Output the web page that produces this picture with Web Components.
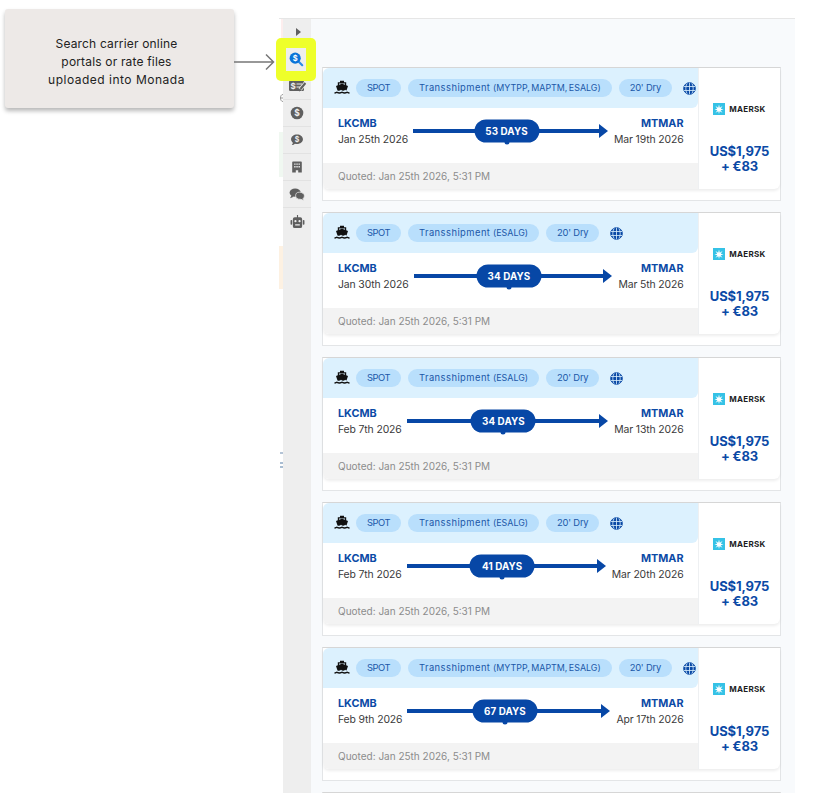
<!DOCTYPE html>
<html>
<head>
<meta charset="utf-8">
<title>Rates</title>
<style>
  html, body { margin: 0; padding: 0; background: #fff; }
  body { font-family: Inter, "Open Sans", sans-serif; }
</style>
</head>
<body>
<quote-page>
  <note-callout slot="note">Search carrier online<br>portals or rate files<br><span style="letter-spacing:.5px">uploaded into Monada</span></note-callout>
  <side-rail slot="rail"></side-rail>
  <rate-card slot="cards" via="(MYTPP, MAPTM, ESALG)" depart="Jan 25th 2026" arrive="Mar 19th 2026" days="53"></rate-card>
  <rate-card slot="cards" via="(ESALG)" depart="Jan 30th 2026" arrive="Mar 5th 2026" days="34"></rate-card>
  <rate-card slot="cards" via="(ESALG)" depart="Feb 7th 2026" arrive="Mar 13th 2026" days="34"></rate-card>
  <rate-card slot="cards" via="(ESALG)" depart="Feb 7th 2026" arrive="Mar 20th 2026" days="41"></rate-card>
  <rate-card slot="cards" via="(MYTPP, MAPTM, ESALG)" depart="Feb 9th 2026" arrive="Apr 17th 2026" days="67"></rate-card>
  <rate-card slot="cards"></rate-card>
</quote-page>

<script>
class QuotePage extends HTMLElement {
  constructor() {
    super();
    this.attachShadow({ mode: 'open' });
    this.shadowRoot.innerHTML = `
      <style>
        :host { display: flex; width: 822px; height: 793px; overflow: hidden; background: #fff; }
        .left { width: 279px; flex: none; padding: 9px 0 0 5px; box-sizing: border-box; }
        .panel {
          width: 484px; flex: none; box-sizing: border-box; height: 775px; margin-top: 18px;
          padding: 48px 14px 0 11px; background: #f8fafc; border-top: 1px solid #e6e6e6;
          display: flex; flex-direction: column; gap: 11px; overflow: hidden;
        }
        .rail { flex: none; display: flex; }
      </style>
      <div class="left"><slot name="note"></slot></div>
      <div class="rail"><slot name="rail"></slot></div>
      <div class="panel"><slot name="cards"></slot></div>
    `;
  }
}

class NoteCallout extends HTMLElement {
  constructor() {
    super();
    this.attachShadow({ mode: 'open' });
    this.shadowRoot.innerHTML = `
      <style>
        :host {
          display: flex; align-items: center; justify-content: center; position: relative;
          width: 229px; height: 99px; box-sizing: border-box; padding: 7px 6px 0 0;
          background: #ede9e7; border-radius: 3px;
          box-shadow: 0 3px 4px rgba(0,0,0,.28);
          font: 400 12px/18px Inter, sans-serif; letter-spacing: .17px; color: #222; text-align: center;
        }
        svg { position: absolute; left: 229px; top: 42px; }
        .text { display: block; }
      </style>
      <span class="text"><slot></slot></span>
      <svg width="42" height="22" viewBox="0 0 42 22" fill="none" stroke="#777" stroke-width="1.5">
        <path d="M0 11H39M32 3.5L39.5 11L32 18.5"/>
      </svg>
    `;
  }
}

const RAIL_ICONS = {
  quote: `<svg width="17" height="14" viewBox="0 0 17 14"><rect x="0" y="1.500" width="15" height="10.500" rx="1.200" fill="#5f5f5f"/><text x="1.500" y="9.800" font-family="Inter" font-size="8" font-weight="700" fill="#eee">$</text><path stroke="#eee" stroke-width="1.200" d="M7.500 5H13M7.500 8h3.500"/><path stroke="#eee" stroke-width="3.800" d="M16.500 4L11 10.500"/><path stroke="#5f5f5f" stroke-width="2.200" d="M16.500 4L11.500 10"/><path fill="#5f5f5f" d="M10 12.500l.7-2.900 2 1.700z"/></svg>`,
  dollar: `<svg width="14" height="14" viewBox="0 0 14 14"><circle cx="7" cy="7" r="6.300" fill="#5f5f5f"/><text x="7" y="10.100" text-anchor="middle" font-family="Inter" font-size="8.500" font-weight="700" fill="#eee">$</text></svg>`,
  chat: `<svg width="14" height="14" viewBox="0 0 16 16"><path fill="#5f5f5f" d="M8 1.800c3.800 0 6.800 2.400 6.800 5.400S11.800 12.600 8 12.600c-.8 0-1.600-.1-2.300-.3-1 .9-2.200 1.500-3.700 1.500.8-.8 1.200-1.700 1.300-2.700C2 10.100 1.200 8.700 1.200 7.200 1.200 4.200 4.200 1.800 8 1.800z"/><text x="8" y="10.200" text-anchor="middle" font-family="Inter" font-size="8" font-weight="700" fill="#eee">$</text></svg>`,
  building: `<svg width="10" height="12" viewBox="0 0 12 15"><path fill="#5f5f5f" fill-rule="evenodd" d="M1 .5h10a1 1 0 0 1 1 1V14.500H7.500V11.500h-3v3H0V1.500a1 1 0 0 1 1-1zM2.500 3v1.800h1.700V3zM5.200 3v1.800h1.700V3zM7.900 3v1.800h1.700V3zM2.500 6.300v1.800h1.700V6.300zM5.200 6.300v1.800h1.700V6.300zM7.900 6.300v1.800h1.700V6.300z"/></svg>`,
  comments: `<svg width="16" height="13" viewBox="0 0 17 14"><ellipse cx="6.500" cy="5" rx="6" ry="4.500" fill="#5f5f5f"/><path fill="#5f5f5f" d="M2.500 8l-1.500 3 4-1.500z"/><path fill="#5f5f5f" stroke="#eee" stroke-width=".8" d="M11 4.500c3 0 5.500 1.700 5.500 4 0 1.100-.6 2.100-1.500 2.800l.8 2.200-3-1.400c-.3 0-.5.100-.8.100-3 0-5-1.700-5-3.700 0-2.300 1-4 4-4z"/></svg>`,
  robot: `<svg width="15" height="13" viewBox="0 0 16 14"><path fill="#5f5f5f" fill-rule="evenodd" d="M7.400 0h1.200v2.500H11a2 2 0 0 1 2 2V12a2 2 0 0 1-2 2H5a2 2 0 0 1-2-2V4.500a2 2 0 0 1 2-2h2.400zM5.800 5.500a1.200 1.200 0 1 0 0 2.400 1.200 1.200 0 0 0 0-2.400zM10.200 5.500a1.200 1.200 0 1 0 0 2.400 1.200 1.200 0 0 0 0-2.400zM5.500 10v1.200h5V10z"/><rect x=".5" y="5.500" width="1.800" height="5" rx=".8" fill="#5f5f5f"/><rect x="13.700" y="5.500" width="1.800" height="5" rx=".8" fill="#5f5f5f"/></svg>`
};

class SideRail extends HTMLElement {
  constructor() {
    super();
    this.attachShadow({ mode: 'open' });
    const items = Object.keys(RAIL_ICONS)
      .map(name => `<div class="item ${name}">${RAIL_ICONS[name]}</div>`).join('');
    this.shadowRoot.innerHTML = `
      <style>
        :host { display: flex; margin-top: 18px; height: 775px; }
        .edge { width: 4px; display: flex; flex-direction: column; border-top: 1px solid #e6e6e6; box-sizing: border-box; overflow: hidden; }
        .edge div, .edge svg { flex: none; display: block; }
        .pink { height: 24px; background: linear-gradient(90deg,#fff 40%,#fdeeee 40%); }
        .gap1 { height: 50px; }
        .mark { height: 10px; }
        .gap2 { height: 29px; }
        .green { height: 45px; background: #f0f8f1; }
        .gap3 { height: 69px; }
        .orange { height: 43px; background: #fdf1e2; }
        .gap4 { height: 163px; }
        .bits {
          height: 17px;
          background: linear-gradient(180deg,#b4c4d6 0 2px,transparent 2px 10px,#a9bdd2 10px 12px,transparent 12px 14px,#a9bdd2 14px 16px,transparent 16px);
          margin-left: 1px;
        }
        .bar { width: 28px; background: #eeeeee; display: flex; flex-direction: column; position: relative; border-top: 1px solid #e6e6e6; box-sizing: border-box; }
        .caret { height: 26px; display: flex; align-items: center; justify-content: center; }
        .caret i { width: 0; height: 0; border-left: 5px solid #5f5f5f; border-top: 4.500px solid transparent; border-bottom: 4.500px solid transparent; margin-left: 2px; }
        .active { height: 28px; }
        .item { height: 27px; flex: none; display: flex; align-items: center; justify-content: center; border-bottom: 1px solid #e2e2e2; box-sizing: border-box; }
        .item.robot { border-bottom: 0; }
        .glow {
          position: absolute; left: -7px; top: 19px; width: 40px; height: 43px; border-radius: 5px;
          background: #eeff2a; display: flex; align-items: center; justify-content: center;
        }
        .glow span { width: 20px; height: 23px; background: #eeeeee; display: flex; align-items: center; justify-content: center; }
      </style>
      <div class="edge">
        <div class="pink"></div><div class="gap1"></div>
        <svg class="mark" width="4" height="10" viewBox="0 0 4 10" fill="none" stroke="#999" stroke-width="1"><path d="M4 1.500C2 1.500 1.500 3.500 1.500 5S2 8.500 4 8.500M1 5h3"/></svg>
        <div class="gap2"></div>
        <div class="green"></div><div class="gap3"></div><div class="orange"></div><div class="gap4"></div><div class="bits"></div>
      </div>
      <div class="bar">
        <div class="caret"><i></i></div>
        <div class="active"></div>
        ${items}
        <div class="glow"><span>
          <svg width="15" height="15" viewBox="0 0 17 17"><path stroke="#2b8be6" stroke-width="2.400" stroke-linecap="round" d="M10.500 10.500L15 15"/><circle cx="7" cy="7" r="6.300" fill="#0a74d8"/><text x="7" y="10.200" text-anchor="middle" font-family="Inter" font-size="8.500" font-weight="700" fill="#fff">$</text></svg>
        </span></div>
      </div>
    `;
  }
}

class RateChip extends HTMLElement {
  constructor() {
    super();
    this.attachShadow({ mode: 'open' });
    this.shadowRoot.innerHTML = `
      <style>
        :host {
          display: inline-flex; align-items: center; flex: none; height: 18px; padding: 0 11px;
          border-radius: 9px; background: #b9dffc; color: #1b57a8;
          font: 400 9.400px/18px Inter, sans-serif; white-space: nowrap;
        }
        span { display: block; }
      </style>
      <span><slot></slot></span>
    `;
  }
}

class CarrierMark extends HTMLElement {
  constructor() {
    super();
    this.attachShadow({ mode: 'open' });
    this.shadowRoot.innerHTML = `
      <style>
        :host { display: flex; align-items: center; gap: 4px; font: 700 8px/12px Inter, sans-serif; letter-spacing: .3px; color: #1d1d1f; }
        svg { display: block; }
      </style>
      <svg width="12" height="12" viewBox="0 0 12 12">
        <rect width="12" height="12" fill="#35c2e6"/>
        <path fill="#fff" d="M6 1.600l.8 3.100 2.700-1.700-1.700 2.700 2.700.8-2.900.8 1.900 2.500-2.800-1.500L6 11l-.7-2.700-2.800 1.500 1.900-2.500-2.900-.8 2.700-.8-1.700-2.700 2.700 1.700z"/>
      </svg>
      <span>MAERSK</span>
    `;
  }
}

class RateCard extends HTMLElement {
  constructor() {
    super();
    this.attachShadow({ mode: 'open' });
  }

  connectedCallback() {
    this.render();
  }

  render() {
    const via = this.getAttribute('via');
    const depart = this.getAttribute('depart');
    const arrive = this.getAttribute('arrive');
    const days = this.getAttribute('days');

    const hostStyle = `
      :host {
        display: block; flex: none; height: 134px; box-sizing: border-box; background: #fff;
        border: 1px solid #e3e5e7; border-top-color: #d6d6d6;
        font-family: Inter, sans-serif;
      }
    `;

    // the last card is only just inside the window, its top border is all that shows
    if (!via) {
      this.shadowRoot.innerHTML = `<style>${hostStyle}</style>`;
      return;
    }

    this.shadowRoot.innerHTML = `
      <style>
        ${hostStyle}
        .inner { display: flex; height: 121px; box-shadow: 0 2px 3px rgba(0,0,0,.07); border-radius: 0 0 6px 6px; }
        .main { width: 375px; flex: none; display: flex; flex-direction: column; border-right: 1px solid #eef0f2; }
        .head {
          height: 40px; flex: none; background: #dcf1fe; border-radius: 6px 0 6px 0;
          display: flex; align-items: center; gap: 7px; padding-left: 11px; box-sizing: border-box;
        }
        .ship { margin-right: -1px; display: block; }
        .globe { margin-left: 4px; display: block; }
        .spot { letter-spacing: -.5px; }
        .word { letter-spacing: .45px; }
        .codes { font-size: 8.900px; word-spacing: -1px; }
        .dry { letter-spacing: -.2px; }
        .route { flex: 1; display: flex; align-items: flex-start; padding: 9px 14.500px 0 15px; gap: 5px; }
        .end { flex: none; display: flex; flex-direction: column; gap: 2px; }
        .end.to { text-align: right; }
        .port { font: 700 10.800px/14px Inter, sans-serif; color: #0b4aa6; }
        .date { font: 400 10.400px/14px Inter, sans-serif; letter-spacing: -.12px; color: #3a3a3a; white-space: nowrap; }
        .line { flex: 1; position: relative; height: 4px; background: #0747a6; margin: 12px 9px 0 0; }
        .line::after {
          content: ""; position: absolute; right: -8px; top: -5px; width: 0; height: 0;
          border-left: 9px solid #0747a6; border-top: 7px solid transparent; border-bottom: 7px solid transparent;
        }
        .days {
          position: absolute; left: 50%; top: 50%; transform: translate(-50%, -50%);
          height: 23px; width: 65px; border-radius: 12px; background: #0747a6; color: #fff;
          font: 700 9.800px/23px Inter, sans-serif; text-align: center; letter-spacing: .1px; white-space: nowrap;
        }
        .days::after {
          content: ""; position: absolute; left: 50%; bottom: -2px; width: 5px; height: 5px;
          margin-left: -2.500px; border-radius: 50%; background: #0747a6;
        }
        .quoted {
          height: 26px; flex: none; background: #f3f3f3; border-radius: 0 0 0 6px; padding-left: 15px;
          font: 400 10px/27px Inter, sans-serif; color: #8c8c8c;
        }
        .side { flex: 1; display: flex; flex-direction: column; align-items: center; padding-top: 35px; box-sizing: border-box; }
        .price { margin-top: 29px; font: 700 13px/15px Inter, sans-serif; letter-spacing: -.1px; color: #0b4aa6; text-align: center; }
      </style>
      <div class="inner">
        <div class="main">
          <div class="head">
            <svg class="ship" width="16" height="16" viewBox="0 0 16 16">
              <path fill="#111" d="M6 .8h4v1.400h2.200v3l1.800.7-1.500 4.600c-.5-.1-1-.4-1.300-.8-.6.7-1.300 1-2.100 1s-1.500-.3-2.100-1c-.6.700-1.300 1-2.100 1-.4 0-.9-.1-1.400-.3L2 5.900l1.800-.7v-3H6zM5 3.400v1.300l3-1 3 1V3.400z"/>
              <path fill="#111" d="M.500 12.300c1 0 1.700-.3 2.400-.7.7.4 1.400.7 2.500.7s1.800-.3 2.600-.7c.8.4 1.500.7 2.600.7s1.800-.3 2.500-.7c.7.4 1.400.7 2.400.7v1.400c-1 0-1.700-.2-2.400-.6-.7.400-1.400.6-2.500.6s-1.800-.2-2.600-.6c-.8.400-1.500.6-2.600.6s-1.800-.2-2.500-.6c-.7.400-1.400.6-2.400.6z"/>
            </svg>
            <rate-chip><span class="spot">SPOT</span></rate-chip>
            <rate-chip><span class="word">Transshipment</span> <span class="codes">${via}</span></rate-chip>
            <rate-chip><span class="dry">20' Dry</span></rate-chip>
            <svg class="globe" width="13" height="13" viewBox="0 0 13 13" fill="none" stroke="#0b4aa6">
              <circle cx="6.500" cy="6.500" r="5.800" fill="#0b4aa6"/>
              <path stroke="#dcf1fe" stroke-width=".8" d="M1 4.500h11M1 8.500h11M6.500 .7v11.600M4 1.500c-1.600 3-1.600 7 0 10M9 1.500c1.600 3 1.600 7 0 10"/>
            </svg>
          </div>
          <div class="route">
            <div class="end"><span class="port">LKCMB</span><span class="date">${depart}</span></div>
            <div class="line"><div class="days">${days} DAYS</div></div>
            <div class="end to"><span class="port">MTMAR</span><span class="date">${arrive}</span></div>
          </div>
          <div class="quoted">Quoted: Jan 25th 2026, 5:31 PM</div>
        </div>
        <div class="side">
          <carrier-mark></carrier-mark>
          <div class="price">US$1,975<br>+ €83</div>
        </div>
      </div>
    `;
  }
}

customElements.define('quote-page', QuotePage);
customElements.define('note-callout', NoteCallout);
customElements.define('side-rail', SideRail);
customElements.define('rate-chip', RateChip);
customElements.define('carrier-mark', CarrierMark);
customElements.define('rate-card', RateCard);
</script>
</body>
</html>
